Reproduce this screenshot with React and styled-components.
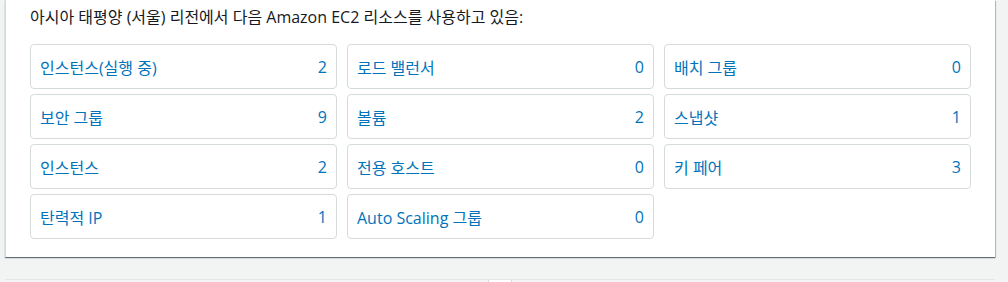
import React from "react";
import styled, { createGlobalStyle } from "styled-components";

const resources = [
  ["인스턴스(실행 중)", 2],
  ["로드 밸런서", 0],
  ["배치 그룹", 0],
  ["보안 그룹", 9],
  ["볼륨", 2],
  ["스냅샷", 1],
  ["인스턴스", 2],
  ["전용 호스트", 0],
  ["키 페어", 3],
  ["탄력적 IP", 1],
  ["Auto Scaling 그룹", 0],
];

export default function App() {
  return (
    <>
      <GlobalStyle />
      <Page>
        <Panel>
          <Header>아시아 태평양 (서울) 리전에서 다음 Amazon EC2 리소스를 사용하고 있음:</Header>
          <Grid>
            {resources.map(([label, count]) => (
              <Card key={label}>
                <Label>{label}</Label>
                <Count>{count}</Count>
              </Card>
            ))}
          </Grid>
        </Panel>
        <NextPanel>
          <Tab />
        </NextPanel>
      </Page>
    </>
  );
}

const GlobalStyle = createGlobalStyle`
  body {
    margin: 0;
    background: #f2f3f3;
    font-family: "Open Sans", "Noto Sans CJK KR", sans-serif;
  }
`;

const Page = styled.div`
  width: 1008px;
  height: 282px;
  overflow: hidden;
  padding-left: 5px;
  box-sizing: border-box;
`;

const Panel = styled.div`
  width: 990px;
  box-sizing: border-box;
  background: #ffffff;
  padding: 7px 24px 18px 24px;
  border-left: 1px solid #d5dbdb;
  box-shadow: 0 1px 1px 0 rgba(0, 28, 36, 0.5), 1px 1px 1px 0 rgba(0, 28, 36, 0.2);
`;

const Header = styled.div`
  font-size: 16px;
  line-height: 20px;
  color: #16191f;
`;

const Grid = styled.div`
  display: grid;
  grid-template-columns: repeat(3, 1fr);
  column-gap: 10px;
  row-gap: 5px;
  margin-top: 17px;
`;

const Card = styled.div`
  height: 45px;
  box-sizing: border-box;
  border: 1px solid #d5dbdb;
  border-radius: 4px;
  padding: 0 9px;
  display: flex;
  align-items: center;
  justify-content: space-between;
  color: #0073bb;
  font-size: 16px;
`;

const Label = styled.span``;

const Count = styled.span``;

const NextPanel = styled.div`
  position: relative;
  width: 990px;
  height: 20px;
  margin-top: 22px;
  border-top: 1px solid #e4e7e7;
  background: #f4f5f5;
`;

const Tab = styled.div`
  position: absolute;
  left: 483px;
  top: 0;
  width: 22px;
  height: 10px;
  background: #ffffff;
  border-left: 1px solid #d5dbdb;
  border-right: 1px solid #d5dbdb;
`;
